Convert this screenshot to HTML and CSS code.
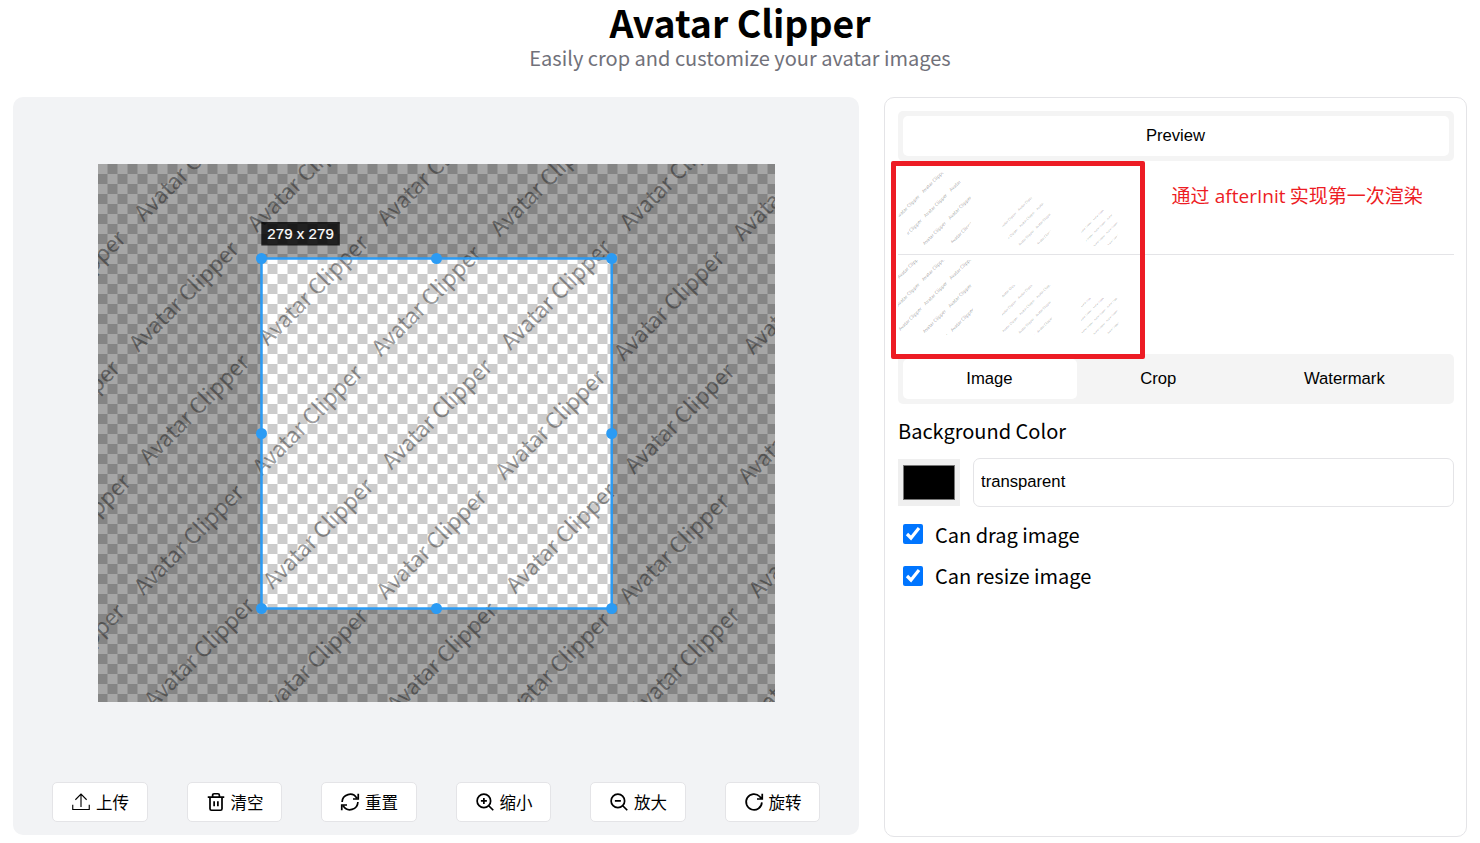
FILE: index.html
```html
<!DOCTYPE html>
<html lang="zh-CN">
<head>
<meta charset="utf-8">
<title>Avatar Clipper</title>
<link rel="stylesheet" href="styles.css">
</head>
<body>
<svg class="defs" width="0" height="0" aria-hidden="true">
  <defs>
    <g id="cell" class="mark">
      <text transform="translate(143.8 222.5) rotate(-45)">Avatar Clipper</text>
      <text transform="translate(257.1 232.9) rotate(-45)">Avatar Clipper</text>
      <text transform="translate(138.4 352.7) rotate(-45)">Avatar Clipper</text>
      <text transform="translate(267.8 346.5) rotate(-45)">Avatar Clipper</text>
    </g>
    <g id="row">
      <use href="#cell" x="-242.7" y="-4.5"/>
      <use href="#cell"/>
      <use href="#cell" x="242.7" y="4.5"/>
      <use href="#cell" x="485.4" y="9"/>
    </g>
    <g id="watermark">
      <use href="#row" x="-5" y="-243.4"/>
      <use href="#row"/>
      <use href="#row" x="5" y="243.4"/>
      <use href="#row" x="10" y="486.8"/>
    </g>
    <pattern id="checker" x="97.5" y="164" width="20" height="20" patternUnits="userSpaceOnUse">
      <rect width="20" height="20" fill="#fff"/>
      <path d="M10 0h10v10H10zM0 10h10v10H0z" fill="#ccc"/>
    </pattern>
  </defs>
</svg>

<header class="header">
  <h1 class="title">Avatar Clipper</h1>
  <p class="subtitle">Easily crop and customize your avatar images</p>
</header>

<main class="layout">
  <section class="editor">
    <div class="stage">
      <svg class="canvas" viewBox="98 164 677 538" width="677" height="538">
        <rect x="98" y="164" width="677" height="538" fill="url(#checker)"/>
        <path d="M98 164h677v538H98zM261.5 258.5v350h350v-350z" fill="#000" fill-opacity=".35"/>
        <use href="#watermark"/>
        <rect x="261.5" y="258.5" width="350.2" height="350" fill="none" stroke="#2b9bf4" stroke-width="2.5"/>
        <g fill="#2b9bf4">
          <circle cx="261.5" cy="258.5" r="5.5"/><circle cx="436.5" cy="258.5" r="5.5"/><circle cx="611.7" cy="258.5" r="5.5"/>
          <circle cx="261.5" cy="433.5" r="5.5"/><circle cx="611.7" cy="433.5" r="5.5"/>
          <circle cx="261.5" cy="608.5" r="5.5"/><circle cx="436.5" cy="608.5" r="5.5"/><circle cx="611.7" cy="608.5" r="5.5"/>
        </g>
        <rect x="261.3" y="222" width="78.5" height="23.5" fill="#000" fill-opacity=".8"/>
        <text class="size" x="267.3" y="239.2" textLength="66.5">279 x 279</text>
      </svg>
    </div>
    <div class="toolbar">
      <button class="tool"><svg class="icon thin" viewBox="0 0 24 24"><path d="M1 15.500V22h22v-6.500M12 18.500V1.500M4.500 9 12 1.500 19.500 9"/></svg>上传</button>
      <button class="tool"><svg class="icon" viewBox="0 0 24 24"><path d="M1 5.500h22M4 5.500V21q0 2 2 2h12q2 0 2-2V5.500M7.500 5V3q0-2 2-2h5q2 0 2 2v2M9.500 11v6.500M14.500 11v6.500"/></svg>清空</button>
      <button class="tool"><svg class="icon" viewBox="0 0 24 24"><path d="M1.500 12A10.500 10.500 0 0 1 21 6.800M23 1v7h-7M22.500 12A10.500 10.500 0 0 1 3 17.200M1 23v-7h7"/></svg>重置</button>
      <button class="tool"><svg class="icon" viewBox="0 0 24 24"><circle cx="10.500" cy="10.500" r="9"/><path d="m17 17 6 6M10.500 6.500v8M6.500 10.500h8"/></svg>缩小</button>
      <button class="tool"><svg class="icon" viewBox="0 0 24 24"><circle cx="10.500" cy="10.500" r="9"/><path d="m17 17 6 6M6.500 10.500h8"/></svg>放大</button>
      <button class="tool"><svg class="icon" viewBox="0 0 24 24"><path d="M22.500 12.500A10.500 10.500 0 1 1 19.600 4.700L22.500 7.500M23 1v7h-7"/></svg>旋转</button>
    </div>
  </section>

  <aside class="panel">
    <div class="tabs"><button class="tab active">Preview</button></div>
    <div class="previews">
      <div class="preview-row">
        <svg class="round" viewBox="261.500 258.500 350 350" width="75" height="75"><use href="#watermark"/></svg>
        <svg class="round" viewBox="261.500 258.500 350 350" width="50" height="50"><use href="#watermark"/></svg>
        <svg class="round" viewBox="261.500 258.500 350 350" width="37.500" height="37.500"><use href="#watermark"/></svg>
      </div>
      <div class="preview-row second">
        <svg viewBox="261.500 258.500 350 350" width="75" height="75"><use href="#watermark"/></svg>
        <svg viewBox="261.500 258.500 350 350" width="50" height="50"><use href="#watermark"/></svg>
        <svg viewBox="261.500 258.500 350 350" width="37.500" height="37.500"><use href="#watermark"/></svg>
      </div>
      <div class="highlight"></div>
      <p class="note">通过 <span class="note-code">afterInit</span> 实现第一次渲染</p>
    </div>
    <div class="tabs">
      <button class="tab active">Image</button>
      <button class="tab">Crop</button>
      <button class="tab">Watermark</button>
    </div>
    <div class="form">
      <div class="label">Background Color</div>
      <div class="color-row">
        <span class="swatch"><span class="swatch-fill"></span></span>
        <input class="input" type="text" value="transparent">
      </div>
      <label class="check"><input type="checkbox" checked>Can drag image</label>
      <label class="check"><input type="checkbox" checked>Can resize image</label>
    </div>
  </aside>
</main>
</body>
</html>
```
FILE: styles.css
```css
* {
  box-sizing: border-box;
}

body {
  margin: 0;
  height: 843px;
  overflow: hidden;
  background: #fff;
  color: #000;
  font-family: "Noto Sans CJK SC", "Noto Sans", sans-serif;
}

button,
input {
  margin: 0;
  font: inherit;
  color: inherit;
}

.defs {
  position: absolute;
}

.header {
  height: 97px;
  text-align: center;
}

.title {
  margin: 0;
  font-size: 37.4px;
  line-height: 44px;
  font-weight: 700;
}

.subtitle {
  margin: 0;
  font-size: 20px;
  line-height: 27px;
  color: #71717a;
}

.layout {
  display: flex;
  align-items: flex-start;
  gap: 25px;
  padding: 0 13px;
}

.editor {
  display: flex;
  flex-direction: column;
  width: 846px;
  height: 737.5px;
  border-radius: 10px;
  background: #f2f3f5;
}

.stage {
  display: flex;
  justify-content: center;
  padding: 67px 0 80px;
}

.canvas {
  display: block;
}

.mark {
  font: 22px "Noto Sans CJK SC", sans-serif;
  fill: #000;
  fill-opacity: 0.4;
}

.size {
  font: 15px "Liberation Sans", Arial, sans-serif;
  fill: #fff;
  stroke: #fff;
  stroke-width: 0.2;
}

.toolbar {
  display: flex;
  justify-content: space-evenly;
}

.tool {
  display: flex;
  align-items: center;
  justify-content: center;
  gap: 6px;
  width: 95.5px;
  height: 40px;
  padding: 0 0 0 1.5px;
  border: 1px solid #e4e4e7;
  border-radius: 5px;
  background: #fff;
  font-size: 16.5px;
}

.icon {
  width: 18px;
  height: 18px;
  overflow: visible;
  fill: none;
  stroke: #000;
  stroke-width: 2.3;
}

.thin {
  stroke-width: 1.5;
}

.panel {
  width: 583px;
  height: 740px;
  padding: 13px 12px 13px 13px;
  border: 1px solid #e4e4e7;
  border-radius: 10px;
}

.tabs {
  display: flex;
  height: 50px;
  padding: 5px;
  border-radius: 5px;
  background: #f4f4f4;
}

.tab {
  flex: 1 1 auto;
  padding: 0 10.5px 0 9.5px;
  border: 0;
  border-radius: 5px;
  background: transparent;
  font-family: "Liberation Sans", Arial, sans-serif;
  font-size: 16.67px;
}

.tab.active {
  background: #fff;
}

.previews {
  position: relative;
  height: 193px;
}

.preview-row {
  display: flex;
  align-items: flex-end;
  gap: 29px;
  height: 94px;
  padding-bottom: 7px;
  border-bottom: 1px solid #e4e4e7;
}

.preview-row.second {
  height: 87px;
  border: 0;
}

.round {
  border-radius: 50%;
}

.highlight {
  position: absolute;
  left: -7px;
  top: -0.5px;
  width: 254.4px;
  height: 198.4px;
  border: 5px solid #ed1c24;
  border-radius: 2px;
}

.note {
  position: absolute;
  left: 273.5px;
  top: 21px;
  margin: 0;
  color: #ed1c24;
  font-size: 19px;
  line-height: 26px;
  white-space: nowrap;
}

.note-code {
  margin-left: 1px;
  font-family: "Open Sans", sans-serif;
}

.form {
  padding-top: 13px;
}

.label {
  font-size: 20px;
  line-height: 28px;
}

.color-row {
  display: flex;
  align-items: center;
  gap: 13px;
  margin: 13px 0 8px;
}

.swatch {
  width: 62px;
  height: 47px;
  padding: 6px 5px;
  background: #efefef;
}

.swatch-fill {
  display: block;
  width: 52px;
  height: 35px;
  border: 1px solid #767676;
  background: #000;
}

.input {
  flex: 1;
  height: 49px;
  padding: 0 7px 1px;
  border: 1px solid #e4e4e7;
  border-radius: 7px;
  background: #fff;
  font-family: "Liberation Sans", Arial, sans-serif;
  font-size: 16.67px;
}

.check {
  display: flex;
  align-items: center;
  gap: 12px;
  height: 41.5px;
  padding: 0 0 2px 5px;
  font-size: 20px;
  line-height: 28px;
}

.check input {
  width: 20px;
  height: 20px;
  margin-bottom: 1px;
}
```
